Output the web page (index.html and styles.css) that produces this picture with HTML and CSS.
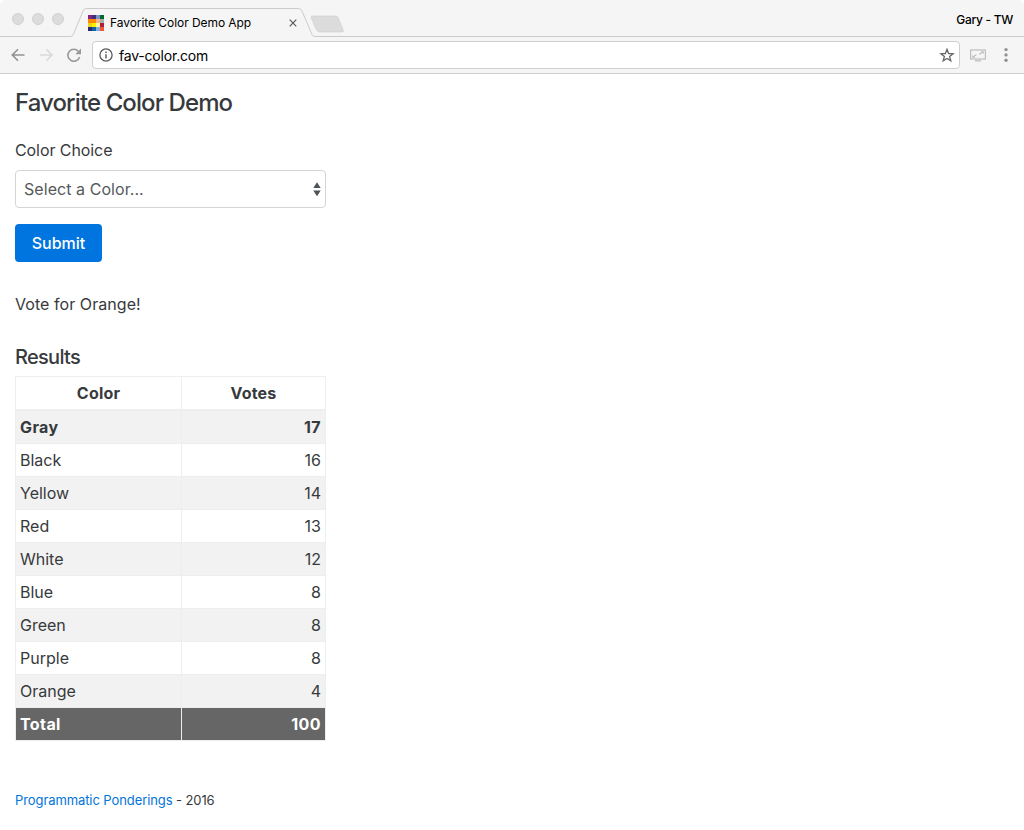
FILE: index.html
```html
<!DOCTYPE html>
<html lang="en">
<head>
<meta charset="utf-8">
<title>Favorite Color Demo App</title>
<link rel="stylesheet" href="styles.css">
</head>
<body>
<header class="browser">
  <div class="tabstrip">
    <svg class="tab-shape" width="1024" height="37" viewBox="0 0 1024 37" fill="none">
      <path d="M0 36.5H70.500Q72.500 36.500 73.300 34.500L83 11Q84.200 8.500 86.500 8.500H298.500Q301 8.500 302 11L312 34.500Q313 36.500 315 36.500H1024" stroke="#cbcbcb"/>
      <path d="M312.500 16H335.500Q337.500 16 338.300 17.800L343.200 30Q344 32 342 32H319.500Q317.500 32 316.500 30L311.200 18Q310.500 16 312.500 16Z" fill="#dcdcdc" stroke="#cfcfcf" stroke-width=".6"/>
    </svg>
    <div class="lights"><i></i><i></i><i></i></div>
    <div class="tab">
      <svg class="favicon" width="16" height="16" viewBox="0 0 4 4" shape-rendering="crispEdges">
        <path fill="#8a2089" d="M0 0h1v1H0z"/><path fill="#3d3275" d="M1 0h1v1H1z"/><path fill="#7f91c8" d="M2 0h1v1H2z"/><path fill="#006a2c" d="M3 0h1v1H3z"/>
        <path fill="#ff8900" d="M0 1h2v1H0z"/><path fill="#f5b58c" d="M2 1h1v1H2z"/><path fill="#a8afac" d="M3 1h1v1H3z"/>
        <path fill="#ead31c" d="M0 2h1v1H0z"/><path fill="#fff000" d="M1 2h1v1H1z"/><path fill="#fff7a6" d="M2 2h1v1H2z"/><path fill="#b01e38" d="M3 2h1v1H3z"/>
        <path fill="#29296c" d="M0 3h1v1H0z"/><path fill="#1262a8" d="M1 3h1v1H1z"/><path fill="#80aedb" d="M2 3h1v1H2z"/><path fill="#f4583c" d="M3 3h1v1H3z"/>
      </svg>
      <span class="tab-title">Favorite Color Demo App</span>
      <svg class="close" width="8" height="8" viewBox="0 0 8 8" stroke="#5a5a5a" stroke-width="1.200"><path d="M.7.7l6.600 6.600M7.300.7L.7 7.300"/></svg>
    </div>
    <span class="profile">Gary - TW</span>
  </div>
  <div class="toolbar">
    <svg class="nav" width="92" height="36" viewBox="0 0 92 36" fill="none" stroke-width="1.600">
      <path d="M24.500 18H12.500M18 12.300L12.300 18l5.700 5.700" stroke="#929292"/>
      <path d="M40 18h12M46.300 12.300L52 18l-5.700 5.700" stroke="#dadada"/>
      <path d="M78.500 14.400A6 6 0 1 0 79.600 20" stroke="#9a9a9a"/>
      <path d="M81 11.500V17.200H75.300z" fill="#9a9a9a"/>
    </svg>
    <div class="address">
      <svg width="14" height="14" viewBox="0 0 14 14" fill="none" stroke="#5a5a5a"><circle cx="7" cy="7" r="6.100" stroke-width="1.300"/><path d="M7 6.200v4.300M7 3.500v1.500" stroke-width="1.400"/></svg>
      <span class="url">fav-color.com</span>
      <svg class="star" width="16" height="16" viewBox="0 0 16 16" fill="none" stroke="#666" stroke-width="1.300"><path d="M8 2.300l1.600 4.200 4.500.2-3.500 2.800 1.200 4.300L8 11.400l-3.800 2.400 1.200-4.300-3.500-2.800 4.500-.2z"/></svg>
    </div>
    <svg class="cast" width="16" height="13" viewBox="0 0 16 13" fill="none" stroke="#bdbdbd"><rect x=".6" y="1" width="14.800" height="9" stroke-width="1.200"/><path d="M5 11.800h6" stroke-width="1.300"/><path d="M3.200 7.700l3.200-1.900M9.300 5.300l3.200-1.900" stroke-width="1.200"/><path d="M2.200 8.700V5.900l3.300 2.800zM13.800 2.300v2.800l-3.300-2.800z" fill="#bdbdbd" stroke="none"/></svg>
    <svg class="menu" width="4" height="16" viewBox="0 0 4 16" fill="#929292"><circle cx="2" cy="2.600" r="1.700"/><circle cx="2" cy="7.900" r="1.700"/><circle cx="2" cy="13.200" r="1.700"/></svg>
  </div>
</header>
<main class="page">
  <h1 class="title">Favorite Color Demo</h1>
  <div class="label"><span>Color Choice</span></div>
  <div class="select">
    <span class="placeholder">Select a Color...</span>
    <svg width="8" height="15" viewBox="0 0 8 15" fill="#4d5357"><path d="M4 .2L7.700 5.900H.3zM4 14.200L.3 8.500h7.400z"/></svg>
  </div>
  <button class="submit">Submit</button>
  <p class="message"><span>Vote for Orange!</span></p>
  <h2 class="subtitle">Results</h2>
  <table class="results">
    <thead><tr><th class="color">Color</th><th>Votes</th></tr></thead>
    <tbody>
      <tr class="leader"><td>Gray</td><td>17</td></tr>
      <tr><td>Black</td><td>16</td></tr>
      <tr><td>Yellow</td><td>14</td></tr>
      <tr><td>Red</td><td>13</td></tr>
      <tr><td>White</td><td>12</td></tr>
      <tr><td>Blue</td><td>8</td></tr>
      <tr><td>Green</td><td>8</td></tr>
      <tr><td>Purple</td><td>8</td></tr>
      <tr><td>Orange</td><td>4</td></tr>
    </tbody>
    <tfoot><tr><td>Total</td><td>100</td></tr></tfoot>
  </table>
  <footer class="footer"><a class="link">Programmatic Ponderings</a> - 2016</footer>
</main>
</body>
</html>
```
FILE: styles.css
```css
* { box-sizing: border-box; }
body { margin: 0; height: 830px; overflow: hidden; background: #fff; color: #373a3c; font: 16px/24px Inter, "Liberation Sans", sans-serif; }
svg { display: block; flex: none; }
.browser { background: #f5f5f5; border-radius: 5px 5px 0 0; color: #000; }
.tabstrip { position: relative; height: 37px; display: flex; align-items: flex-start; }
.tab-shape { position: absolute; left: 0; top: 0; }
.lights { position: relative; display: flex; gap: 8px; padding: 13px 0 0 12px; width: 88px; }
.lights i { width: 12px; height: 12px; border-radius: 50%; background: #dcdcdc; border: 1px solid #d1d1d1; }
.tab { position: relative; display: flex; align-items: center; width: 209px; height: 16px; margin-top: 15px; }
.tab-title { margin-left: 6px; font-size: 12px; line-height: 16px; letter-spacing: -0.06px; white-space: nowrap; }
.close { margin-left: auto; }
.profile { margin: 12px 11px 0 auto; font-size: 12px; line-height: 16px; font-weight: 500; letter-spacing: -0.3px; position: relative; }
.toolbar { height: 37px; display: flex; align-items: center; border-bottom: 1px solid #cfcfcf; }
.address { width: 868px; height: 28px; display: flex; align-items: center; background: #fff; border: 1px solid #cfcfcf; border-radius: 4px; padding: 0 4px 0 6px; }
.url { margin: 1px 0 0 6px; font-size: 14px; line-height: 20px; letter-spacing: -0.2px; }
.star { margin-left: auto; }
.cast { margin-left: 10px; }
.menu { margin-left: 18px; }
.page { padding: 14px 15px 0; }
.title { margin: 0; font-size: 24px; line-height: 30px; font-weight: 500; letter-spacing: -0.9px; }
.label { margin-top: 20px; letter-spacing: -0.08px; }
.select { width: 311px; height: 38px; margin-top: 8px; display: flex; align-items: center; justify-content: space-between; padding: 0 4px 0 8px; border: 1px solid #d5d5d5; border-radius: 4px; color: #55595c; letter-spacing: 0.06px; }
.submit { display: block; width: 87px; height: 38px; margin: 16px 0 0; padding: 0; border: 0; border-radius: 4px; background: #0074df; color: #fff; font: 500 16px/24px Inter, "Liberation Sans", sans-serif; }
.message { margin: 30px 0 0; letter-spacing: 0.06px; }
.subtitle { margin: 29px 0 0; font-size: 20px; line-height: 24px; font-weight: 500; letter-spacing: -0.7px; }
.results { width: 311px; margin-top: 7px; table-layout: fixed; border-collapse: separate; border-spacing: 0; border: solid #eceeef; border-width: 1px 0 0 1px; }
.results th, .results td { height: 33px; padding: 0 4px; border: solid #eceeef; border-width: 0 1px 1px 0; text-align: left; }
.results th { height: 34px; border-bottom-width: 2px; text-align: center; font-weight: 700; letter-spacing: 0.2px; }
.results .color { width: 166px; }
.results td + td { text-align: right; }
.results tbody tr:nth-child(odd) { background: #f2f2f2; }
.leader, .results tfoot { font-weight: 700; letter-spacing: 0.4px; }
.results tfoot { background: #666; color: #fff; }
.footer { margin-top: 47px; font-size: 13px; line-height: 24px; letter-spacing: -0.09px; }
.link { color: #0275d8; }
```
